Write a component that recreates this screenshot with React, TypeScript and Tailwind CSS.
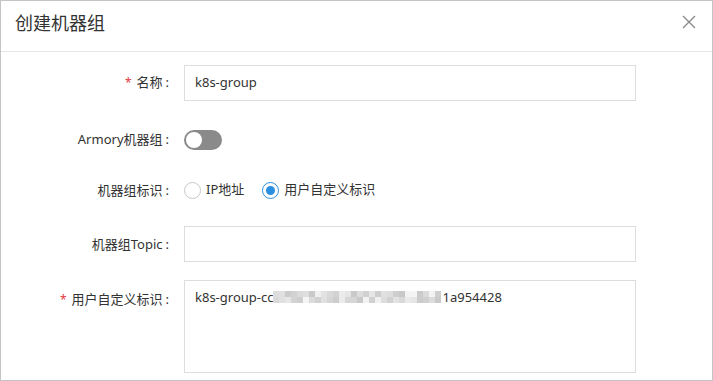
import React from "react";

const font = { fontFamily: '"Noto Sans", "Noto Sans CJK SC", sans-serif' };

function Label({ text, required }: { text: string; required?: boolean }) {
  return (
    <div className="w-[168px] shrink-0 text-right text-[13px] text-[#333] leading-[36px] whitespace-nowrap">
      {required && <span className="text-[#e4393c] text-[12px] mr-[5px]">*</span>}
      {text}
      <span className="ml-[3px]">:</span>
    </div>
  );
}

const cols = 28;
const cells: string[] = [];
let seed = 7;
for (let i = 0; i < cols * 2; i++) {
  seed = (seed * 9301 + 49297) % 233280;
  const v = 198 + Math.floor((seed / 233280) * 48);
  cells.push(`rgb(${v},${v},${v})`);
}

export default function App() {
  return (
    <div className="w-[713px] h-[381px] bg-white border border-[#c4c4c4] flex flex-col overflow-hidden" style={font}>
      <div className="h-[51px] shrink-0 border-b border-[#e6e6e6] flex items-start justify-between pl-[14px] pr-[16px] pt-[9px]">
        <div className="text-[18px] text-[#333] leading-[26px]">创建机器组</div>
        <svg width="14" height="14" viewBox="0 0 14 14" className="mt-[5px]">
          <path d="M1 1 L13 13 M13 1 L1 13" stroke="#888" strokeWidth="1.3" fill="none" />
        </svg>
      </div>
      <div className="flex flex-col pt-[12px]">
        <div className="flex items-center gap-[15px]">
          <Label text="名称" required />
          <div className="w-[452px] h-[36px] border border-[#dddddd] flex items-center px-[10px] text-[13px] text-[#333]">
            k8s-group
          </div>
        </div>
        <div className="flex items-center gap-[15px] mt-[20px]">
          <Label text="Armory机器组" />
          <div className="w-[38px] h-[20px] rounded-full bg-[#8a8a8a] flex items-center px-[2px] mt-[2px]">
            <div className="w-[16px] h-[16px] rounded-full bg-white" />
          </div>
        </div>
        <div className="flex items-center gap-[15px] mt-[15px]">
          <Label text="机器组标识" />
          <div className="flex items-center text-[13px] text-[#333]">
            <div className="w-[17px] h-[17px] rounded-full border border-[#c8c8c8] bg-white" />
            <span className="ml-[5px]">IP地址</span>
            <div className="w-[17px] h-[17px] rounded-full border border-[#2b8fe0] bg-white flex items-center justify-center ml-[18px]">
              <div className="w-[9px] h-[9px] rounded-full bg-[#2b8fe0]" />
            </div>
            <span className="ml-[5px]">用户自定义标识</span>
          </div>
        </div>
        <div className="flex items-center gap-[15px] mt-[18px]">
          <Label text="机器组Topic" />
          <div className="w-[452px] h-[36px] border border-[#dddddd]" />
        </div>
        <div className="flex items-start gap-[15px] mt-[18px]">
          <div className="pt-[1px]">
            <Label text="用户自定义标识" required />
          </div>
          <div className="w-[452px] h-[93px] border border-[#dddddd] px-[10px] pt-[7px] text-[13px] text-[#333] leading-[18px] flex items-start">
            <span>k8s-group-cc</span>
            <span className="grid grid-cols-[repeat(28,6px)] grid-rows-[repeat(2,6px)] mt-[3px] mr-[1px]">
              {cells.map((c, i) => (
                <span key={i} className="w-[6px] h-[6px]" style={{ background: c }} />
              ))}
            </span>
            <span>1a954428</span>
          </div>
        </div>
      </div>
    </div>
  );
}
